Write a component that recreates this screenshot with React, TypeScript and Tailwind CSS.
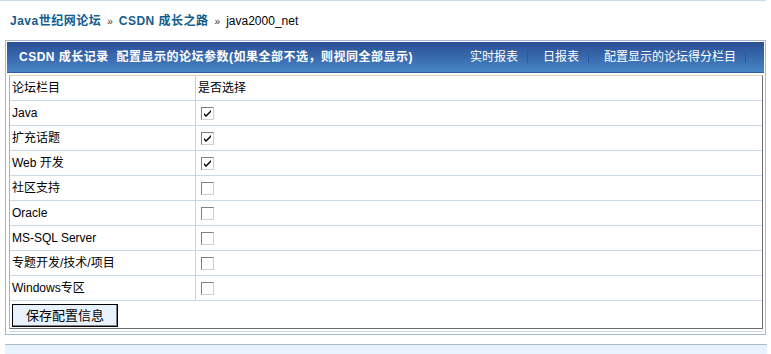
import React from 'react';

const forums = [
  { name: 'Java', on: true },
  { name: '扩充话题', on: true },
  { name: 'Web 开发', on: true },
  { name: '社区支持', on: false },
  { name: 'Oracle', on: false },
  { name: 'MS-SQL Server', on: false },
  { name: '专题开发/技术/项目', on: false },
  { name: 'Windows专区', on: false },
];

const links = ['实时报表', '日报表', '配置显示的论坛得分栏目'];

function Box({ on }: { on: boolean }) {
  return (
    <span className="flex h-[13px] w-[13px] items-center justify-center border border-t-[#808080] border-l-[#808080] border-r-[#d4d0c8] border-b-[#d4d0c8] bg-white">
      {on && (
        <svg width="9" height="9" viewBox="0 0 9 9">
          <path d="M1 4 L3 6 L8 1 L8 3 L3 8 L1 6 Z" fill="#000" />
        </svg>
      )}
    </span>
  );
}

export default function App() {
  return (
    <div className="h-[354px] w-[771px] overflow-hidden bg-white text-[12px] text-black font-[family-name:'Liberation_Sans','Noto_Sans_CJK_SC',sans-serif]">
      <div className="h-px w-[766px] bg-[#c8d8e8]" />

      {/* breadcrumb */}
      <div className="flex h-[39px] items-center pl-[10px] pt-px">
        <span className="font-bold tracking-[0.5px] text-[#135d8f]">Java世纪网论坛</span>
        <span className="mx-[6px] text-[10px] text-[#333]">»</span>
        <span className="font-bold tracking-[0.5px] text-[#135d8f]">CSDN 成长之路</span>
        <span className="mx-[6px] text-[10px] text-[#333]">»</span>
        <span>java2000_net</span>
      </div>

      {/* panel */}
      <div className="ml-[5px] w-[761px] border border-[#a5b8cc] p-px">
        <div className="flex h-[31px] items-center justify-between border-b border-[#2d5ea6] bg-gradient-to-b from-[#2b4f95] to-[#4785c6] pl-[12px] pr-[18px] text-white">
          <span className="font-bold tracking-[0.5px]">CSDN 成长记录&nbsp;&nbsp;配置显示的论坛参数(如果全部不选，则视同全部显示)</span>
          <div className="flex items-center">
            {links.map((l) => (
              <div key={l} className="flex items-center pl-[15px]">
                <span>{l}</span>
                <span className="ml-[9px] h-[12px] w-px bg-[#2a57a0]" />
              </div>
            ))}
          </div>
        </div>

        <div className="pl-[2px] pr-px pt-[2px] pb-px">
          <div className="border border-t-[#d4d0c8] border-l-[#b0b0b0] border-r-[#707070] border-b-[#707070]">
            <div className="grid h-[24px] grid-cols-[185px_1fr] items-center">
              <span className="pl-[2px]">论坛栏目</span>
              <span className="flex h-full items-center border-l border-[#d4d0c8] pl-[2px]">是否选择</span>
            </div>
            {forums.map((f) => (
              <div key={f.name} className="grid h-[25px] grid-cols-[185px_1fr] border-t border-[#c8d8e8]">
                <span className="flex items-center pl-[2px]">{f.name}</span>
                <span className="flex items-center border-l border-[#d4d0c8] pl-[5px]">
                  <Box on={f.on} />
                </span>
              </div>
            ))}
            <div className="h-[28px] border-t border-[#c8d8e8] pl-[2px] pt-[3px]">
              <button className="h-[23px] w-[106px] border border-black bg-[#e8f2fc] text-[13px] shadow-[inset_-1px_-1px_0_#808080]">
                保存配置信息
              </button>
            </div>
          </div>
          <div className="mt-[2px] h-px bg-[#c8d8e8]" />
        </div>
      </div>

      <div className="ml-[5px] mt-[9px] h-[20px] w-[762px] border-t border-[#a8bccc] bg-[#e8f2fc]" />
    </div>
  );
}
